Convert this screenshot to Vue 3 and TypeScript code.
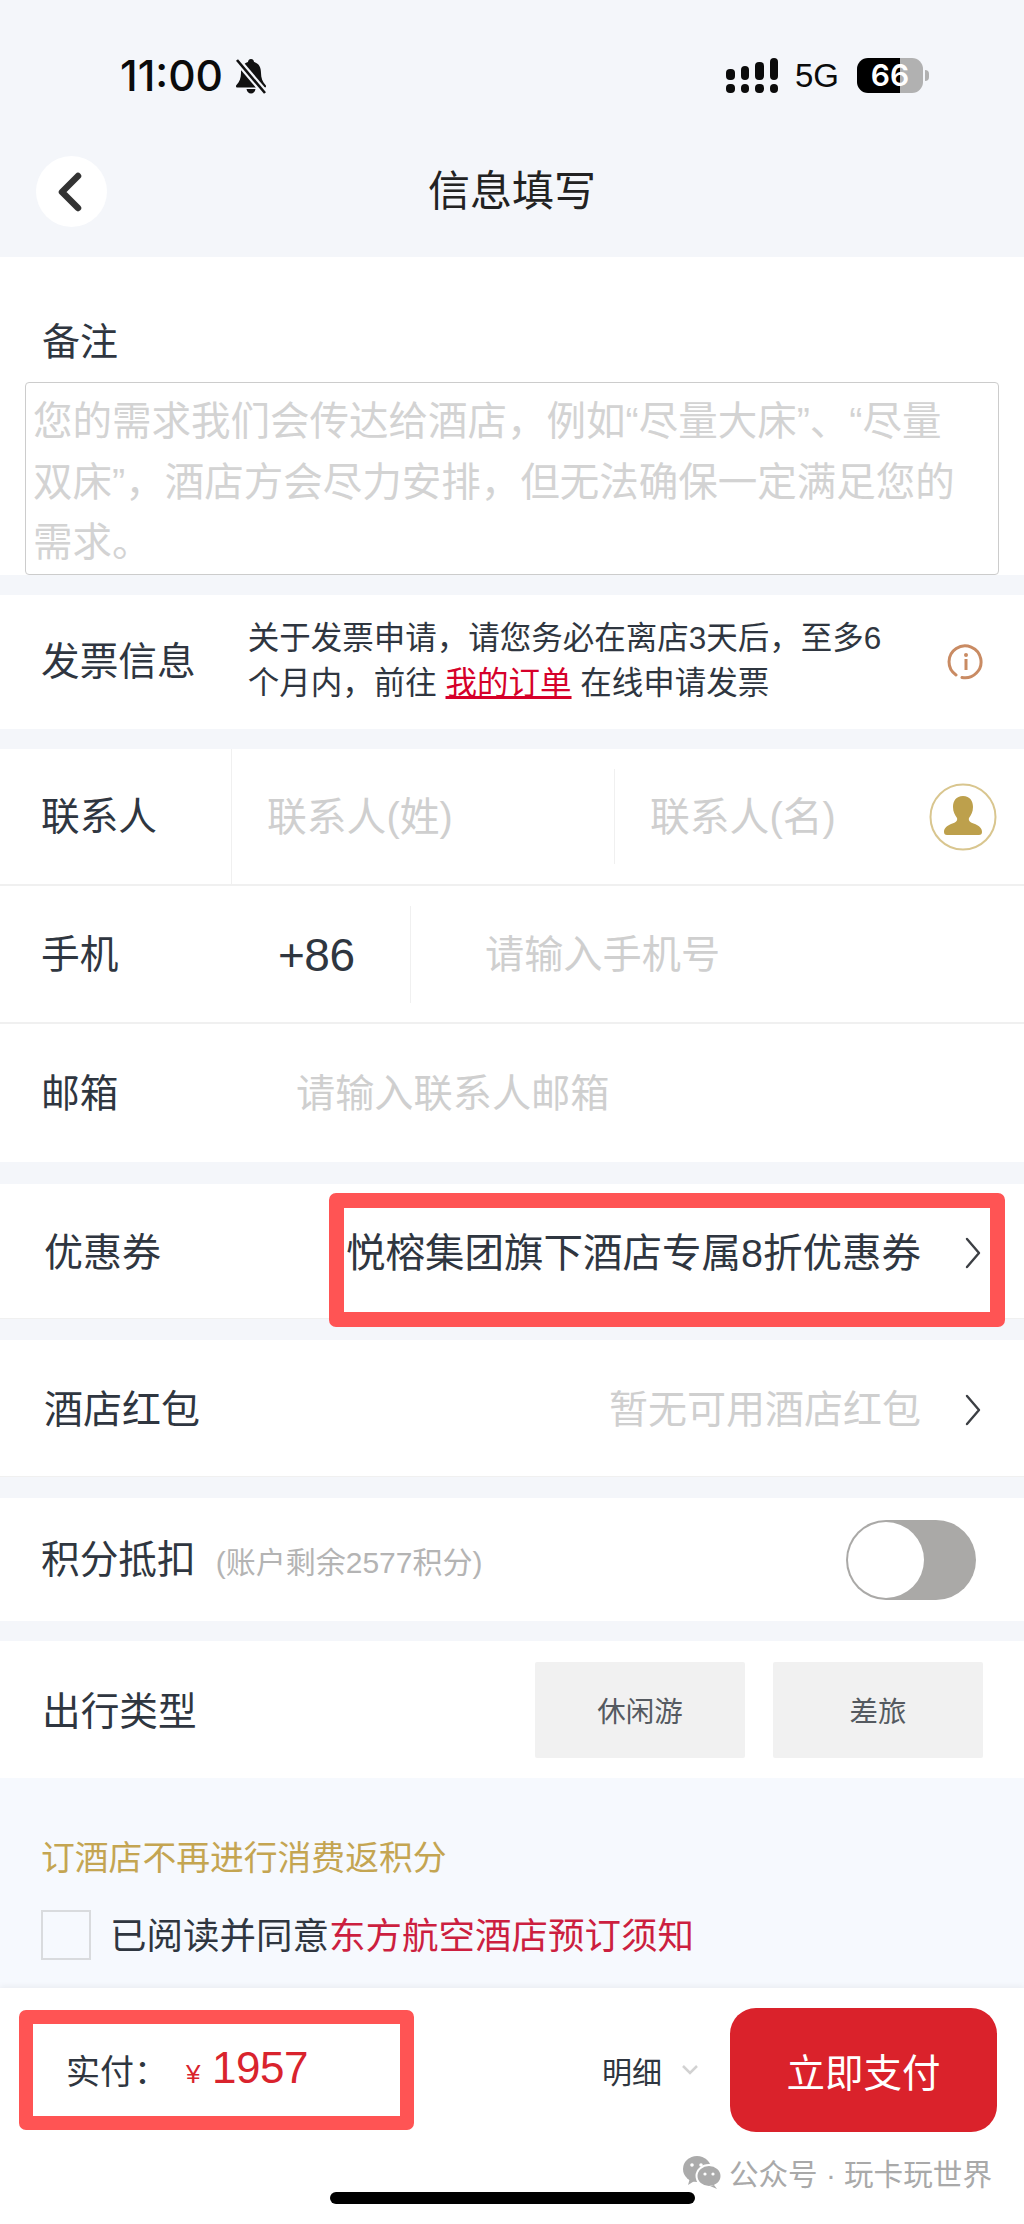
<script setup lang="ts">
const signalHeights: number[] = [11, 14, 18, 22];
const rows = [
  { label: '优惠券', value: '悦榕集团旗下酒店专属8折优惠券', muted: false, marked: true },
  { label: '酒店红包', value: '暂无可用酒店红包', muted: true, marked: false },
];
</script>

<template>
  <div class="page">
    <header class="top">
      <div class="status">
        <div class="time">11:00</div>
        <svg class="bell" viewBox="0 0 34 36" width="34" height="36">
          <path d="M17 1c-2 0-3 1.500-3 3C8.500 5.500 7 10 7 15c0 5-1.500 9-4.500 12-1 1-.5 2.500 1 2.500h27c1.500 0 2-1.500 1-2.500-3-3-4.500-7-4.500-12 0-5-1.500-9.500-7-11 0-1.500-1-3-3-3z" fill="#111" />
          <path d="M12.500 31h9c-.5 2.800-2.200 4.500-4.500 4.500s-4-1.700-4.500-4.500z" fill="#111" />
          <path d="M3 2 L31 35" stroke="#f4f6fa" stroke-width="7" />
          <path d="M3 2 L31 35" stroke="#111" stroke-width="2.600" />
        </svg>
        <div class="status-right">
          <div class="signal">
            <div v-for="(h, i) in signalHeights" :key="i" class="signal-col">
              <span class="bar" :style="{ height: h + 'px' }"></span>
              <span class="dot"></span>
            </div>
          </div>
          <div class="net">5G</div>
          <div class="battery">66</div>
          <div class="battery-tip"></div>
        </div>
      </div>
      <nav class="nav">
        <div class="back">
          <svg viewBox="0 0 71 71" width="71" height="71">
            <path d="M42 20 L26 36 L42 52" fill="none" stroke="#333" stroke-width="6.500" stroke-linecap="round" stroke-linejoin="round" />
          </svg>
        </div>
        <div class="title">信息填写</div>
        <div></div>
      </nav>
    </header>

    <section class="remark">
      <div class="label remark-label">备注</div>
      <div class="textarea">您的需求我们会传达给酒店，例如“尽量大床”、“尽量双床”，酒店方会尽力安排，但无法确保一定满足您的需求。</div>
    </section>

    <section class="invoice">
      <div class="label">发票信息</div>
      <div class="invoice-text">关于发票申请，请您务必在离店3天后，至多6个月内，前往 <span class="link">我的订单</span> 在线申请发票</div>
      <svg class="info" viewBox="0 0 38 38" width="38" height="38">
        <path d="M9 32 A16 16 0 1 1 15 34.500" fill="none" stroke="#c98b63" stroke-width="3" stroke-linecap="round" />
        <circle cx="19" cy="12" r="2" fill="#c98b63" />
        <rect x="17.500" y="16" width="3" height="11" fill="#c98b63" />
      </svg>
    </section>

    <section class="contact">
      <div class="row row-contact">
        <div class="label cell-label">联系人</div>
        <div class="name-cell first"><span class="ph name-ph">联系人(姓)</span></div>
        <div class="name-cell second"><span class="ph name-ph">联系人(名)</span></div>
        <svg class="avatar" viewBox="0 0 68 68" width="68" height="68">
          <circle cx="34" cy="34" r="32.500" fill="none" stroke="#d9c68f" stroke-width="2" />
          <path d="M34 13c-7 0-10 5-10 11 0 5 2 8 4 11 1 3-2 5-6 6-4 2-7 4-7 8 0 2 1 3 3 3h32c2 0 3-1 3-3 0-4-3-6-7-8-4-1-7-3-6-6 2-3 4-6 4-11 0-6-3-11-10-11z" fill="#bda04c" />
        </svg>
      </div>
      <div class="row row-phone">
        <div class="label phone-label">手机</div>
        <div class="code">+86</div>
        <div class="phone-input"><span class="ph">请输入手机号</span></div>
      </div>
      <div class="row row-email">
        <div class="label email-label">邮箱</div>
        <span class="ph">请输入联系人邮箱</span>
      </div>
    </section>

    <section v-for="r in rows" :key="r.label" class="link-row" :class="{ marked: r.marked }">
      <div class="label link-label">{{ r.label }}</div>
      <div class="link-value" :class="{ muted: r.muted }">{{ r.value }}</div>
      <svg class="chev" viewBox="0 0 18 32" width="18" height="32">
        <path d="M3 2 L15 16 L3 30" fill="none" stroke="#3c3f44" stroke-width="2.400" stroke-linecap="round" stroke-linejoin="round" />
      </svg>
      <div v-if="r.marked" class="mark-box"></div>
    </section>

    <section class="points">
      <div class="label">积分抵扣</div>
      <div class="points-sub">(账户剩余2577积分)</div>
      <div class="toggle"><span class="knob"></span></div>
    </section>

    <section class="travel">
      <div class="label travel-label">出行类型</div>
      <div class="chips">
        <div class="chip">休闲游</div>
        <div class="chip">差旅</div>
      </div>
    </section>

    <section class="notice">
      <div class="tip">订酒店不再进行消费返积分</div>
      <div class="agree">
        <div class="check"></div>
        <div class="agree-text">已阅读并同意<span class="agree-red">东方航空酒店预订须知</span></div>
      </div>
    </section>

    <footer class="footer">
      <div class="bar-row">
        <div class="price-box">
          <span class="pay-label">实付：</span>
          <span class="yen">¥</span>
          <span class="amount">1957</span>
        </div>
        <div class="detail">
          <span>明细</span>
          <svg viewBox="0 0 20 12" width="20" height="12">
            <path d="M3 2 L10 9 L17 2" fill="none" stroke="#d2d2d2" stroke-width="2.500" />
          </svg>
        </div>
        <div class="pay-btn">立即支付</div>
      </div>
      <div class="watermark">
        <svg viewBox="0 0 40 34" width="40" height="34">
          <ellipse cx="15" cy="14" rx="14" ry="13" fill="#ababab" />
          <path d="M8 23 L6 30 L14 25z" fill="#ababab" />
          <ellipse cx="27" cy="21" rx="12.500" ry="11" fill="#ababab" stroke="#fff" stroke-width="2" />
          <path d="M32 30 L35 34 L28 31z" fill="#ababab" />
          <circle cx="10" cy="10" r="1.800" fill="#fff" />
          <circle cx="19" cy="10" r="1.800" fill="#fff" />
          <circle cx="23" cy="19" r="1.600" fill="#fff" />
          <circle cx="31" cy="19" r="1.600" fill="#fff" />
        </svg>
        <span>公众号 · 玩卡玩世界</span>
      </div>
      <div class="home"></div>
    </footer>
  </div>
</template>

<style scoped>
.page {
  width: 1024px;
  height: 2224px;
  display: flex;
  flex-direction: column;
  overflow: hidden;
  background: #f4f6fa;
  font-family: "Liberation Sans", "Noto Sans CJK SC", sans-serif;
  color: #2f3640;
}
.top {
  height: 257px;
  flex: none;
  background: #f4f6fa;
  box-sizing: border-box;
  padding-top: 57px;
}
.status {
  height: 37px;
  display: flex;
  align-items: center;
  padding: 0 95px 0 120px;
  color: #0b0b0b;
}
.time {
  font-family: Inter, "Liberation Sans", sans-serif;
  font-size: 42.500px;
  font-weight: 500;
  letter-spacing: 0;
  width: 114px;
  white-space: nowrap;
}
.bell { display: block; }
.status-right {
  margin-left: auto;
  display: flex;
  align-items: center;
}
.signal { display: flex; gap: 6px; align-items: flex-end; height: 35px; }
.signal-col { display: flex; flex-direction: column; justify-content: flex-end; gap: 4px; width: 8.500px; }
.bar, .dot { display: block; background: #0b0b0b; border-radius: 4px; }
.dot { height: 9px; }
.net {
  font-family: "Liberation Sans", sans-serif;
  font-size: 33px;
  margin-left: 17px;
  width: 62px;
}
.battery {
  width: 66px;
  height: 35px;
  border-radius: 11px;
  background: linear-gradient(90deg, #000 0 65%, #b1b1b1 65% 100%);
  color: #fff;
  font-family: Inter, sans-serif;
  font-weight: 600;
  font-size: 30px;
  line-height: 35px;
  text-align: center;
}
.battery-tip {
  width: 4px;
  height: 11px;
  margin-left: 2px;
  background: #b1b1b1;
  border-radius: 0 4px 4px 0;
}
.nav {
  margin-top: 62px;
  padding: 0 36px;
  display: grid;
  grid-template-columns: 71px 1fr 71px;
  align-items: center;
}
.back { width: 71px; height: 71px; border-radius: 50%; background: #fff; }
.back svg { display: block; }
.title { text-align: center; font-size: 42px; line-height: 71px; color: #222; }

.label { font-size: 38.700px; line-height: 50px; color: #2f3640; white-space: nowrap; }

.remark {
  height: 318px;
  flex: none;
  background: #fff;
  box-sizing: border-box;
  padding: 60px 25px 0;
}
.remark-label { padding-left: 17px; font-size: 38px; }
.textarea {
  margin-top: 15px;
  height: 193px;
  box-sizing: border-box;
  border: 1.500px solid #cccccc;
  border-radius: 4px;
  padding: 8px 20px 0 7px;
  font-size: 39.500px;
  line-height: 60.500px;
  color: #d3d3d3;
}

.invoice {
  height: 134px;
  flex: none;
  margin-top: 20px;
  background: #fff;
  display: flex;
  align-items: center;
  padding: 0 39px 0 41px;
}
.invoice-text {
  width: 645px;
  margin-left: 52px;
  font-size: 31.500px;
  line-height: 45px;
  margin-top: -3px;
  color: #2f3640;
}
.link { color: #d6002a; text-decoration: underline; }
.info { display: block; margin-left: auto; flex: none; }

.contact { margin-top: 20px; flex: none; background: #fff; }
.row { display: flex; align-items: center; box-sizing: border-box; border-bottom: 2px solid #f0f0f0; }
.row-contact { height: 137px; padding-left: 41px; }
.cell-label { width: 190px; flex: none; align-self: center; }
.name-cell { display: flex; align-items: center; }
.name-cell.first { height: 135px; width: 383px; flex: none; padding-left: 35px; box-sizing: border-box; border-left: 1px solid #f0f0f0; }
.name-cell.second { height: 95px; width: 281px; flex: none; padding-left: 35px; box-sizing: border-box; border-left: 1px solid #f0f0f0; }
.avatar { display: block; margin-left: 34px; flex: none; }
.ph { font-size: 39.200px; line-height: 50px; color: #cfcfcf; white-space: nowrap; }
.name-ph { font-size: 39.800px; }
.row-phone { height: 138px; padding-left: 41px; padding-top: 1px; }
.phone-label { width: 237px; flex: none; }
.code { width: 132px; flex: none; font-size: 46px; color: #2f3640; letter-spacing: -0.500px; }
.phone-input { height: 97px; flex: none; display: flex; align-items: center; padding-left: 74px; border-left: 1px solid #f0f0f0; }
.row-email { height: 138px; padding-left: 41px; padding-top: 2px; border-bottom: none; }
.email-label { width: 255px; flex: none; }

.link-row {
  position: relative;
  flex: none;
  margin-top: 21px;
  height: 137px;
  background: #fff;
  box-sizing: border-box;
  border-bottom: 1px solid #f0f0f0;
  display: flex;
  align-items: center;
  padding: 4px 42px 0 44px;
}
.link-row.marked { margin-top: 22px; height: 135px; }
.link-label { flex: none; font-size: 39px; }
.link-value { margin-left: auto; font-size: 39.500px; line-height: 50px; color: #2f3640; white-space: nowrap; }
.link-value.muted { font-size: 39px; color: #cfcfcf; }
.chev { display: block; margin-left: 43px; flex: none; }
.mark-box {
  position: absolute;
  left: 329px;
  top: 9px;
  width: 676px;
  height: 134px;
  box-sizing: border-box;
  border: 15px solid #ff5454;
  border-radius: 7px;
  pointer-events: none;
}

.points {
  margin-top: 21px;
  height: 123px;
  flex: none;
  background: #fff;
  display: flex;
  align-items: center;
  padding: 0 48px 0 41px;
}
.points-sub { margin-left: 20px; font-size: 30px; color: #b4b4b4; white-space: nowrap; }
.toggle {
  margin-left: auto;
  width: 130px;
  height: 80px;
  flex: none;
  border-radius: 40px;
  background: #aaa9a7;
  box-sizing: border-box;
  padding: 2px;
}
.knob {
  display: block;
  width: 76px;
  height: 76px;
  border-radius: 50%;
  background: #fff;
}

.travel {
  margin-top: 20px;
  height: 137px;
  flex: none;
  background: #fff;
  display: flex;
  align-items: center;
  padding: 0 41px 0 42px;
}
.travel-label { margin-top: 4px; }
.chips { margin-left: auto; display: flex; gap: 28px; }
.chip {
  width: 210px;
  height: 96px;
  background: #f1f1f1;
  border-radius: 2px;
  display: flex;
  align-items: center;
  justify-content: center;
  font-size: 28.500px;
  color: #555a60;
}

.notice {
  flex: 1;
  background: #f6f9fe;
  padding: 0 41px;
  box-sizing: border-box;
}
.tip { margin-top: 57px; font-size: 33.800px; line-height: 46px; color: #c4a552; white-space: nowrap; }
.agree { margin-top: 27px; display: flex; align-items: center; }
.check {
  width: 50px;
  height: 50px;
  box-sizing: border-box;
  border: 2px solid #d9dbde;
}
.agree-text { margin-left: 19px; margin-top: 4px; font-size: 36.500px; line-height: 50px; color: #2f3640; white-space: nowrap; }
.agree-red { color: #cc1f40; }

.footer {
  height: 236px;
  flex: none;
  background: #fff;
  box-shadow: 0 -2px 6px rgba(0, 0, 0, 0.05);
  position: relative;
  box-sizing: border-box;
  padding-top: 20px;
}
.bar-row {
  display: flex;
  align-items: center;
  height: 124px;
  padding: 0 27px 0 19px;
}
.price-box {
  width: 395px;
  height: 120px;
  box-sizing: border-box;
  border: 14px solid #ff5454;
  border-radius: 7px;
  display: flex;
  align-items: center;
  padding-left: 33px;
}
.pay-label { font-size: 34px; color: #2f3640; width: 120px; flex: none; margin-top: -2px; }
.yen { font-size: 26px; color: #d9232d; margin-top: 8px; width: 26px; flex: none; }
.amount { font-size: 44px; color: #d9232d; letter-spacing: -0.500px; margin-top: -4px; }
.detail {
  margin-left: 188px;
  width: 128px;
  flex: none;
  display: flex;
  align-items: center;
  gap: 18px;
  font-size: 30px;
  color: #2f3640;
}
.pay-btn {
  width: 267px;
  height: 124px;
  border-radius: 26px;
  background: #da222b;
  color: #fff;
  display: flex;
  align-items: center;
  justify-content: center;
  font-size: 38.500px;
}
.watermark {
  margin-top: 22px;
  height: 36px;
  padding-right: 32px;
  display: flex;
  justify-content: flex-end;
  align-items: center;
  gap: 7px;
  font-size: 29.600px;
  color: #a9a9a9;
}
.home {
  width: 365px;
  height: 12px;
  margin: 2px 0 0 330px;
  background: #000;
  border-radius: 6px;
}
</style>
